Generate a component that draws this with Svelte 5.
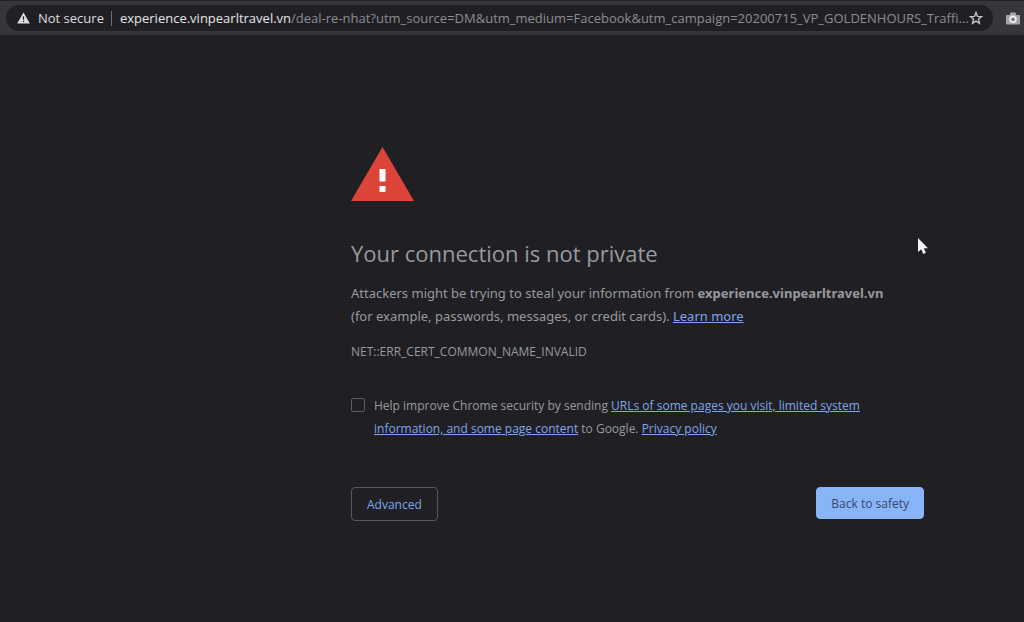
<script>
    let host = 'experience.vinpearltravel.vn';
    let path = '/deal-re-nhat?utm_source=DM&utm_medium=Facebook&utm_campaign=20200715_VP_GOLDENHOURS_Traffi...';
    let report = false;
</script>

<style>
    :global(body) {
        background: #202024;
        color: #979a9e;
        font-family: "Open Sans", "Noto Sans", sans-serif;
        font-size: 13px;
    }

    .toolbar {
        display: flex;
        align-items: center;
        gap: 13px;
        height: 35px;
        padding: 0 4px 0 6px;
        box-sizing: border-box;
        background: #36363b;
        border-top: 1px solid #242428;
    }

    .omnibox {
        flex: 1;
        min-width: 0;
        display: flex;
        align-items: center;
        height: 26px;
        padding: 0 10px 0 11px;
        border-radius: 13px;
        background: #202024;
        line-height: 24px;
    }

    svg {
        display: block;
        flex: none;
    }

    button {
        font-family: inherit;
        cursor: pointer;
    }

    .secure {
        display: flex;
        align-items: center;
        gap: 8px;
        padding: 0;
        border: 0;
        background: none;
        color: #dcdde0;
        font-size: 13px;
        line-height: 24px;
        white-space: nowrap;
    }

    .divider {
        width: 1px;
        height: 15px;
        margin: 0 8px 0 7px;
        background: #6b6d72;
    }

    .url {
        flex: 1;
        min-width: 0;
        overflow: hidden;
        white-space: nowrap;
        outline: none;
        color: #8b8d91;
    }

    .host {
        color: #e4e5e8;
    }

    .icon {
        padding: 0;
        border: 0;
        background: none;
    }

    main {
        max-width: 573px;
        margin: 112px 100px 0 auto;
    }

    h1 {
        margin: 36px 0 13px;
        font-size: 22px;
        font-weight: 400;
        line-height: 32px;
    }

    p {
        margin: 0;
        line-height: 23px;
    }

    .warning {
        font-family: "Noto Sans", "Open Sans", sans-serif;
    }

    .code {
        margin-top: 12px;
        font-size: 12px;
    }

    a {
        color: #7ea6ec;
    }

    .report {
        display: flex;
        align-items: flex-start;
        gap: 9px;
        margin-top: 31px;
        font-size: 12px;
        line-height: 23px;
    }

    .report input {
        appearance: none;
        flex: none;
        width: 14px;
        height: 14px;
        margin: 4px 0 0;
        border: 1px solid #5c5e63;
        border-radius: 2px;
        background: #202024;
    }

    .report input:checked {
        background: #8ab4f8;
    }

    .actions {
        display: flex;
        align-items: flex-start;
        justify-content: space-between;
        margin-top: 47px;
    }

    .actions button {
        height: 34px;
        padding: 0 15px;
        border: 1px solid #57595e;
        border-radius: 4px;
        background: none;
        color: #7ea6ec;
        font-size: 12px;
    }

    .actions .primary {
        height: 32px;
        padding: 0 14px;
        border-color: #8ab4f8;
        background: #8ab4f8;
        color: #35496b;
    }

    .cursor {
        position: absolute;
        left: 917px;
        top: 237px;
        pointer-events: none;
    }
</style>

<header class="toolbar">
    <div class="omnibox">
        <button class="secure">
            <svg width="13" height="12" viewBox="0 0 13 12">
                <path d="M6.5 0.5 L12.8 11.5 H0.2 Z" fill="#dcdde0" />
                <path d="M6.5 4.2 V7.8 M6.5 8.8 V10.1" stroke="#202024" stroke-width="1.2" />
            </svg>
            Not secure
        </button>
        <span class="divider"></span>
        <div class="url" role="textbox" tabindex="0" aria-label="Address" contenteditable="true"><span class="host">{host}</span>{path}</div>
        <button class="icon" aria-label="Bookmark this page">
            <svg width="14" height="14" viewBox="0 0 14 14" fill="none" stroke="#c6c7ca" stroke-width="1.3">
                <path d="M7 1.5 L8.5 5.3 L12.6 5.6 L9.5 8.2 L10.5 12.3 L7 10.1 L3.5 12.3 L4.5 8.2 L1.4 5.6 L5.5 5.3 Z" />
            </svg>
        </button>
    </div>
    <button class="icon" aria-label="Screenshot extension">
        <svg width="14" height="13" viewBox="0 0 14 13">
            <path d="M1 3 H4 V1.5 Q4 0.5 5 0.5 H9 Q10 0.5 10 1.5 V3 H13 Q14 3 14 4 V11.5 Q14 12.5 13 12.5 H1 Q0 12.5 0 11.5 V4 Q0 3 1 3 Z" fill="#a6a6aa" />
            <circle cx="7" cy="7.3" r="2.8" fill="#77777c" stroke="#f0f0f2" stroke-width="1.8" />
        </svg>
    </button>
</header>

<main>
    <svg width="63" height="54" viewBox="0 0 63 54">
        <path d="M31.5 0 L63 54 H0 Z" fill="#db4437" />
        <path d="M28.5 22 H34.5 V34.5 H28.5 Z M28.5 39 H34.5 V45 H28.5 Z" fill="#fff" />
    </svg>

    <h1>Your connection is not private</h1>
    <p class="warning">
        Attackers might be trying to steal your information from <strong>{host}</strong><br />
        (for example, passwords, messages, or credit cards). <a href="#learn">Learn more</a>
    </p>
    <p class="code">NET::ERR_CERT_COMMON_NAME_INVALID</p>

    <div class="report">
        <input type="checkbox" id="report" bind:checked={report} />
        <label for="report">
            Help improve Chrome security by sending <a href="#data">URLs of some pages you visit, limited system
            information, and some page content</a> to Google. <a href="#privacy">Privacy policy</a>
        </label>
    </div>

    <div class="actions">
        <button>Advanced</button>
        <button class="primary">Back to safety</button>
    </div>
</main>

<svg class="cursor" width="12" height="18" viewBox="0 0 12 18">
    <path d="M1 1 V15 L4.2 12.2 L6.3 17 L8.9 15.8 L6.8 11.3 H11 Z" fill="#f4f4f6" />
</svg>
